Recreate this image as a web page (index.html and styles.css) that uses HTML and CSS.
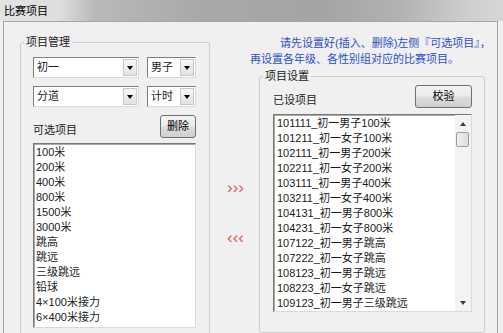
FILE: index.html
```html
<!DOCTYPE html>
<html lang="zh-CN">
<head>
    <meta charset="UTF-8">
    <meta name="viewport" content="width=device-width, initial-scale=1.0">
    <title>比赛项目</title>
    <link rel="stylesheet" href="styles.css">
</head>
<body>

    <div class="titlebar">比赛项目</div>

    <div class="window">
        <div class="content">

            <!-- Left: event management -->
            <fieldset class="group group-left">
                <legend>项目管理</legend>
                <div class="combo-row">
                    <div class="combo combo-wide"><span>初一</span><i class="drop"><b></b></i></div>
                    <div class="combo combo-narrow"><span>男子</span><i class="drop"><b></b></i></div>
                </div>
                <div class="combo-row">
                    <div class="combo combo-wide"><span>分道</span><i class="drop"><b></b></i></div>
                    <div class="combo combo-narrow"><span>计时</span><i class="drop"><b></b></i></div>
                </div>
                <div class="label-row">
                    <span class="label">可选项目</span>
                    <button class="btn btn-del">删除</button>
                </div>
                <div class="listbox list-left">
                    <div class="item">100米</div>
                    <div class="item">200米</div>
                    <div class="item">400米</div>
                    <div class="item">800米</div>
                    <div class="item">1500米</div>
                    <div class="item">3000米</div>
                    <div class="item">跳高</div>
                    <div class="item">跳远</div>
                    <div class="item">三级跳远</div>
                    <div class="item">铅球</div>
                    <div class="item">4×100米接力</div>
                    <div class="item">6×400米接力</div>
                </div>
            </fieldset>

            <!-- Middle: move buttons -->
            <div class="arrows">
                <span class="arrow">›››</span>
                <span class="arrow">‹‹‹</span>
            </div>

            <!-- Right: configured events -->
            <div class="right">
                <p class="note">请先设置好(插入、删除)左侧『可选项目』，<br>再设置各年级、各性别组对应的比赛项目。</p>
                <fieldset class="group group-right">
                    <legend>项目设置</legend>
                    <div class="label-row">
                        <span class="label">已设项目</span>
                        <button class="btn btn-check">校验</button>
                    </div>
                    <div class="listbox list-right">
                        <div class="items">
                            <div class="item">101111_初一男子100米</div>
                            <div class="item">101211_初一女子100米</div>
                            <div class="item">102111_初一男子200米</div>
                            <div class="item">102211_初一女子200米</div>
                            <div class="item">103111_初一男子400米</div>
                            <div class="item">103211_初一女子400米</div>
                            <div class="item">104131_初一男子800米</div>
                            <div class="item">104231_初一女子800米</div>
                            <div class="item">107122_初一男子跳高</div>
                            <div class="item">107222_初一女子跳高</div>
                            <div class="item">108123_初一男子跳远</div>
                            <div class="item">108223_初一女子跳远</div>
                            <div class="item">109123_初一男子三级跳远</div>
                        </div>
                        <div class="vscroll">
                            <div class="sb-btn"><b class="tri-up"></b></div>
                            <div class="thumb"></div>
                            <div class="sb-space"></div>
                            <div class="sb-btn"><b class="tri-down"></b></div>
                        </div>
                    </div>
                </fieldset>
            </div>

        </div>
    </div>

</body>
</html>
```

FILE: styles.css
```css
/* Reset */
* {
    margin: 0;
    padding: 0;
    box-sizing: border-box;
}

body {
    width: 503px;
    height: 333px;
    overflow: hidden;
    background-color: #f0f0f0;
    color: #1a1a1a;
    font-family: "Liberation Sans", "Noto Sans CJK SC", sans-serif;
    font-size: 11px;
    line-height: 15px;
}

/* Window title (blurred in the shot) */
.titlebar {
    height: 21px;
    padding-left: 4px;
    line-height: 22px;
    color: #000;
    background: linear-gradient(90deg, #e3e3e3 0, #dedede 60px, #b9b9b9 95px, #a9a9a9 200px, #a4a4a4 320px, #b2b2b2 400px, #cfcfcf 470px, #d6d6d6 100%);
}

/* Window body */
.window {
    margin: 0 5px 0 3px;
    height: 320px;
    border: 1px solid #a6a6a6;
    border-bottom: none;
    background-color: #f0f0f0;
}

.content {
    display: flex;
    padding: 13px 0 0 16px;
}

/* Group boxes */
.group {
    border: 1px solid #cdcdcd;
    border-radius: 3px;
}

.group legend {
    padding: 0 2px;
    line-height: 14px;
}

.group-left {
    width: 190px;
    padding: 8px 13px 12px 12px;
}

.group-left legend {
    margin-left: -9px;
}

.group-right {
    width: 226px;
    margin-left: 9px;
    padding: 2px 12px 20px 13px;
}

.group-right legend {
    margin-left: -10px;
}

/* Combo boxes */
.combo-row {
    display: flex;
    gap: 8px;
    margin-bottom: 8px;
}

.combo {
    display: flex;
    height: 21px;
    background-color: #fff;
    border: 1px solid;
    border-color: #7e7e7e #d9d9d9 #d9d9d9 #7e7e7e;
}

.combo span {
    flex: 1;
    padding-left: 3px;
    line-height: 19px;
}

.combo-wide {
    width: 106px;
}

.combo-narrow {
    width: 49px;
}

.drop {
    display: flex;
    align-items: center;
    justify-content: center;
    width: 14px;
    margin: 1px;
    border: 1px solid #c6c6c6;
    background: linear-gradient(#f7f7f7, #e2e2e2);
}

.drop b {
    border-top: 4px solid #000;
    border-left: 3.5px solid transparent;
    border-right: 3.5px solid transparent;
}

/* Label + button rows */
.label-row {
    display: flex;
    align-items: flex-end;
    justify-content: space-between;
    height: 23px;
}

.label {
    padding-bottom: 0;
}

.btn {
    height: 23px;
    font: inherit;
    color: #000;
    border: 1px solid #707070;
    border-radius: 3px;
    background: linear-gradient(#f3f3f3 0%, #ebebeb 48%, #dddddd 52%, #cfcfcf 100%);
}

.btn-del {
    width: 36px;
}

.btn-check {
    width: 57px;
}

/* List boxes */
.listbox {
    background-color: #fff;
    border: 1px solid;
    border-color: #777 #dadada #dadada #777;
    box-shadow: inset 1px 1px 0 #a9a9a9;
}

.list-left {
    height: 185px;
    margin-top: 5px;
    padding: 1px 0 0 2px;
}

.list-right {
    display: flex;
    height: 198px;
    margin-top: 6px;
}

.items {
    flex: 1;
    padding: 1px 0 0 3px;
}

.item {
    line-height: 15px;
    white-space: nowrap;
}

/* Scrollbar of the right list */
.vscroll {
    display: flex;
    flex-direction: column;
    width: 16px;
    background-color: #f3f3f3;
}

.sb-btn {
    display: flex;
    align-items: center;
    justify-content: center;
    height: 17px;
}

.tri-up {
    border-bottom: 4px solid #3c3c3c;
    border-left: 3.5px solid transparent;
    border-right: 3.5px solid transparent;
}

.tri-down {
    border-top: 4px solid #3c3c3c;
    border-left: 3.5px solid transparent;
    border-right: 3.5px solid transparent;
}

.thumb {
    width: 13px;
    height: 15px;
    margin-left: 1px;
    border: 1px solid #9c9c9c;
    border-radius: 2px;
    background: linear-gradient(90deg, #f0f0f0, #dcdcdc);
}

.sb-space {
    flex: 1;
}

/* Move arrows */
.arrows {
    display: flex;
    flex-direction: column;
    gap: 34px;
    width: 40px;
    padding: 145px 0 0 17px;
}

.arrow {
    color: #e05a5a;
    font-size: 17px;
    line-height: 16px;
}

/* Right column */
.right {
    width: 245px;
}

.note {
    height: 34px;
    color: #2b4fc7;
    line-height: 16px;
    text-indent: 30px;
    white-space: nowrap;
}
```
